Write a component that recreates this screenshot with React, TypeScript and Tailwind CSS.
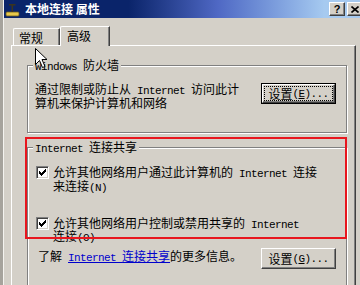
import type { ReactNode } from 'react';

// half-width latin, like SimSun's 6px latin cells
const H = ({ children }: { children: ReactNode }) => (
  <span className="font-['Liberation_Mono',monospace] text-[11px] leading-[0px] tracking-[-0.6px]">{children}</span>
);

const Check = () => (
  <div className="w-[13px] h-[13px] flex-none bg-white border border-t-[#808080] border-l-[#808080] border-r-white border-b-white shadow-[inset_1px_1px_0_#404040,inset_-1px_-1px_0_#d4d0c8] flex items-center justify-center">
    <svg width="7" height="7" viewBox="0 0 7 7" shapeRendering="crispEdges">
      <path d="M0 2h1v1h1v1h1V3h1V2h1V1h1V0h1v3H6v1H5v1H4v1H3v1H2V6H1V5H0z" fill="#000" />
    </svg>
  </div>
);

const Btn = ({ children, focused }: { children: ReactNode; focused?: boolean }) =>
  focused ? (
    <div className="w-[75px] h-[21px] flex-none border border-black">
      <div className="h-full border border-t-white border-l-white border-r-[#404040] border-b-[#404040] shadow-[inset_-1px_-1px_0_#808080] p-[1px]">
        <div className="h-full border border-dotted border-black flex items-center justify-center leading-[12px]">{children}</div>
      </div>
    </div>
  ) : (
    <div className="w-[75px] h-[21px] flex-none border border-t-white border-l-white border-r-[#404040] border-b-[#404040] shadow-[inset_-1px_-1px_0_#808080] flex items-center justify-center leading-[12px]">
      {children}
    </div>
  );

const Group = ({ title, className, children }: { title: ReactNode; className: string; children: ReactNode }) => (
  <div className={`relative w-[320px] border border-[#808080] shadow-[inset_1px_1px_0_#fff,1px_1px_0_#fff] ${className}`}>
    <div className="absolute left-[5px] -top-[7px] px-[2px] bg-[#d4d0c8] leading-[12px] whitespace-nowrap">{title}</div>
    {children}
  </div>
);

export default function App() {
  return (
    <div className="relative w-[360px] h-[285px] overflow-hidden bg-[#d4d0c8] flex font-['Noto_Sans_CJK_SC',sans-serif] text-[12px] leading-[14px] text-black">
      <div className="w-[3px] flex-none bg-[#a6a39c]" />
      <div className="w-px flex-none bg-[#f4f3ef]" />
      <div className="flex-1 flex flex-col min-w-0">
        {/* title bar */}
        <div className="h-[18px] flex-none flex items-center bg-linear-to-r from-[#0a246a] from-35% via-[#4f68c4] via-60% to-[#a6caf0] to-90%">
          <svg width="16" height="16" viewBox="0 0 16 16" className="flex-none">
            <rect x="2" y="11" width="13" height="4" rx="1" fill="#e8c84a" stroke="#6b5a1e" strokeWidth="0.8" />
            <rect x="7.5" y="3" width="1.6" height="8" fill="#3a3420" />
            <rect x="5" y="3" width="6.5" height="1.6" fill="#3a3420" />
          </svg>
          <span className="ml-[5px] text-white font-bold leading-[14px] whitespace-nowrap">本地连接 属性</span>
          <div className="ml-auto mr-[-3px] flex gap-[2px] flex-none">
            <div className="w-[16px] h-[14px] bg-[#d4d0c8] border border-t-white border-l-white border-r-[#404040] border-b-[#404040] shadow-[inset_-1px_-1px_0_#808080] flex items-center justify-center font-['Liberation_Sans',sans-serif] font-bold text-[11px] leading-[11px]">?</div>
            <div className="w-[16px] h-[14px] bg-[#d4d0c8] border border-t-white border-l-white border-r-[#404040] border-b-[#404040] shadow-[inset_-1px_-1px_0_#808080] flex items-center justify-center">
              <svg width="8" height="7" viewBox="0 0 8 7"><path d="M0.5 0.5l7 6M7.5 0.5l-7 6" stroke="#000" strokeWidth="1.6" /></svg>
            </div>
          </div>
        </div>

        <div className="flex-1 flex pl-[7px]">
          <div className="w-[345px] flex flex-col">
            {/* tabs */}
            <div className="h-[27px] flex items-end flex-none">
              <div className="ml-[2px] w-[47px] h-[17px] border-t border-l border-white border-r border-r-[#404040] shadow-[inset_-1px_0_0_#808080] rounded-tl-[2px] pl-[5px] pt-[2px] leading-[14px]">常规</div>
              <div className="relative z-10 w-[50px] h-[20px] mb-[-1px] bg-[#d4d0c8] border-t border-l border-white border-r border-r-[#404040] shadow-[inset_-1px_0_0_#808080] rounded-tl-[2px] pl-[6px] pt-[2px] leading-[14px]">高级</div>
            </div>
            {/* panel */}
            <div className="flex-1 border-t border-l border-white border-r border-r-[#404040] shadow-[inset_-1px_0_0_#808080] pl-[15px]">
              <Group className="mt-[19px] h-[68px]" title={<><H>Windows </H>防火墙</>}>
                <div className="flex pt-[16px] pl-[7px] pr-[10px]">
                  <div className="whitespace-nowrap">
                    通过限制或防止从<H> Internet </H>访问此计<br />算机来保护计算机和网络
                  </div>
                  <div className="ml-auto mt-[1px]">
                    <Btn focused>设置<H>(<span className="underline">E</span>)...</H></Btn>
                  </div>
                </div>
              </Group>

              <Group className="mt-[14px] h-[170px]" title={<><H>Internet </H>连接共享</>}>
                <div className="pt-[17px]">
                  <div className="flex items-start pl-[8px]">
                    <div className="mt-[1px]"><Check /></div>
                    <div className="ml-[4px] whitespace-nowrap">
                      允许其他网络用户通过此计算机的<H> Internet </H>连接<br />来连接<H>(N)</H>
                    </div>
                  </div>
                  <div className="flex items-start pl-[8px] mt-[23px]">
                    <div className="mt-[1px]"><Check /></div>
                    <div className="ml-[4px] whitespace-nowrap leading-[13px]">
                      允许其他网络用户控制或禁用共享的<H> Internet</H><br />连接<H>(O)</H>
                    </div>
                  </div>
                  <div className="flex items-start mt-[6px] pl-[10px] pr-[10px]">
                    <div className="mt-[1px] whitespace-nowrap">
                      了解<H> </H><span className="text-[#0000cc] underline"><H>Internet </H>连接共享</span>的更多信息。
                    </div>
                    <div className="ml-auto">
                      <Btn>设置<H> (<span className="underline">G</span>)...</H></Btn>
                    </div>
                  </div>
                </div>
              </Group>
            </div>
          </div>
          <div className="flex-1" />
        </div>
      </div>

      {/* red annotation box */}
      <div className="absolute left-[25px] top-[137px] w-[322px] h-[102px] border-2 border-[#e8161e] pointer-events-none" />

      {/* mouse pointer */}
      <svg className="absolute left-[35px] top-[48px] pointer-events-none" width="13" height="21" viewBox="0 0 13 21">
        <path d="M0.5 0.5V16.5L4.5 12.5L7.5 19.5L10 18.5L7 11.5H12Z" fill="#fff" stroke="#000" strokeWidth="1" strokeLinejoin="miter" />
      </svg>
    </div>
  );
}
